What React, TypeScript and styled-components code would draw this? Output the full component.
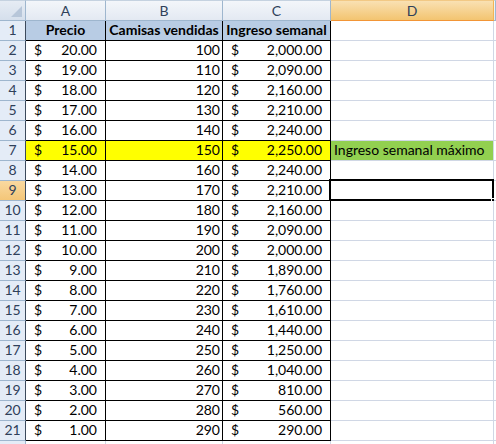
import React from "react";
import styled, { createGlobalStyle, css } from "styled-components";

const Global = createGlobalStyle`
  html, body { margin: 0; padding: 0; background: #fff; }
  body { font-family: Lato, "Noto Sans", sans-serif; }
`;

const COLS = "26px 80px 117px 108px 163px 2px";
const GRID = "#d0d7e5";
const HEADLINE = "#9eb6ce";
const FONT = "14px";

const Sheet = styled.div`
  width: 496px;
  height: 444px;
  overflow: hidden;
  background: #fff;
  font-family: Lato, "Noto Sans", sans-serif;
  font-size: ${FONT};
  color: #000;
`;

const Row = styled.div<{ $h: number }>`
  display: grid;
  grid-template-columns: ${COLS};
  height: ${(p) => p.$h}px;
`;

const Corner = styled.div`
  position: relative;
  box-sizing: border-box;
  border-right: 1px solid ${HEADLINE};
  border-bottom: 1px solid ${HEADLINE};
  border-top: 1px solid #c5d2e0;
  background: linear-gradient(#e6ecf4, #d5dfec);
  &::after {
    content: "";
    position: absolute;
    right: 3px;
    bottom: 3px;
    width: 0;
    height: 0;
    border-left: 11px solid transparent;
    border-bottom: 11px solid #b7c6d9;
  }
`;

const ColHead = styled.div<{ $active?: boolean }>`
  box-sizing: border-box;
  border-top: 1px solid #c5d2e0;
  border-right: 1px solid ${HEADLINE};
  border-bottom: 1px solid ${HEADLINE};
  display: flex;
  align-items: center;
  justify-content: center;
  color: #2f405a;
  font-size: ${FONT};
  background: linear-gradient(#f3f6fa, #e3e9f2);
  ${(p) =>
    p.$active &&
    css`
      background: linear-gradient(#f9e1b3, #f3c470);
      border-right-color: #f2b455;
      border-bottom-color: #f29536;
      border-top-color: #f2c985;
    `}
`;

const RowHead = styled.div<{ $active?: boolean; $framed?: boolean }>`
  box-sizing: border-box;
  border-right: 1px solid ${(p) => (p.$framed ? "#3c4a5c" : HEADLINE)};
  border-bottom: 1px solid ${HEADLINE};
  background: ${(p) => (p.$active ? "linear-gradient(#f9d9a0, #f4c678)" : "#e4ecf7")};
  display: flex;
  align-items: flex-end;
  justify-content: center;
  padding-bottom: 1px;
  line-height: 18px;
  color: #2f405a;
`;

const Cell = styled.div<{ $fill?: string; $bold?: boolean; $align?: string }>`
  box-sizing: border-box;
  border-right: 1px solid #000;
  border-bottom: 1px solid #000;
  background: ${(p) => p.$fill || "#fff"};
  display: flex;
  align-items: flex-end;
  justify-content: ${(p) => p.$align || "flex-end"};
  padding: 0 2px 1px 2px;
  line-height: 18px;
  font-weight: ${(p) => (p.$bold ? 700 : 400)};
  white-space: nowrap;
  overflow: hidden;
`;

const Money = styled(Cell)`
  justify-content: space-between;
  padding: 0 8px 1px 8px;
`;

const Blank = styled.div<{ $fill?: string; $selected?: boolean }>`
  position: relative;
  box-sizing: border-box;
  border-right: 1px solid ${GRID};
  border-bottom: 1px solid ${GRID};
  background: ${(p) => p.$fill || "#fff"};
  display: flex;
  align-items: flex-end;
  padding: 0 3px 1px 3px;
  line-height: 18px;
  white-space: nowrap;
  overflow: visible;
  ${(p) =>
    p.$selected &&
    css`
      &::before {
        content: "";
        position: absolute;
        left: -2px;
        top: -2px;
        right: -1px;
        bottom: -1px;
        border: 2px solid #000;
        pointer-events: none;
      }
      &::after {
        content: "";
        position: absolute;
        right: -3px;
        bottom: -3px;
        width: 5px;
        height: 5px;
        background: #000;
        border: 1px solid #fff;
        box-sizing: border-box;
      }
    `}
`;

const fmt = (n: number) =>
  n.toLocaleString("en-US", { minimumFractionDigits: 2, maximumFractionDigits: 2 });

const rows = Array.from({ length: 20 }, (_, i) => {
  const price = 20 - i;
  const qty = 100 + i * 10;
  return { price, qty, income: price * qty };
});

export default function App() {
  return (
    <>
      <Global />
      <Sheet>
        <Row $h={21}>
          <Corner />
          <ColHead>A</ColHead>
          <ColHead>B</ColHead>
          <ColHead>C</ColHead>
          <ColHead $active>D</ColHead>
          <ColHead />
        </Row>
        <Row $h={20}>
          <RowHead $framed>1</RowHead>
          <Cell $fill="#b8cce4" $bold $align="center">Precio</Cell>
          <Cell $fill="#b8cce4" $bold $align="center">Camisas vendidas</Cell>
          <Cell $fill="#b8cce4" $bold $align="center">Ingreso semanal</Cell>
          <Blank />
          <Blank />
        </Row>
        {rows.map((r, i) => {
          const n = i + 2;
          const hi = n === 7;
          const fill = hi ? "#ffff00" : undefined;
          return (
            <Row $h={20} key={n}>
              <RowHead $framed $active={n === 9}>{n}</RowHead>
              <Money $fill={fill}>
                <span>$</span>
                <span>{fmt(r.price)}</span>
              </Money>
              <Cell $fill={fill}>{r.qty}</Cell>
              <Money $fill={fill}>
                <span>$</span>
                <span>{fmt(r.income)}</span>
              </Money>
              {hi ? (
                <Blank $fill="#92d050">Ingreso semanal máximo</Blank>
              ) : (
                <Blank $selected={n === 9} />
              )}
              <Blank />
            </Row>
          );
        })}
        <Row $h={20}>
          <RowHead />
          <Blank />
          <Blank />
          <Blank />
          <Blank />
          <Blank />
        </Row>
      </Sheet>
    </>
  );
}
